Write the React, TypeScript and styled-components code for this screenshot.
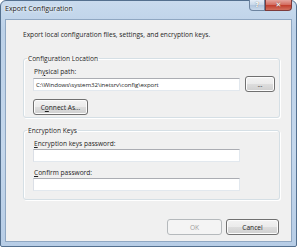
import React from 'react';
import styled, { createGlobalStyle } from 'styled-components';

const GlobalStyle = createGlobalStyle`
  html, body {
    margin: 0;
    padding: 0;
    background: #ffffff;
  }
  body {
    font-family: "Open Sans", "DejaVu Sans", sans-serif;
    font-size: 6.6px;
    color: #1e1e1e;
  }
`;

const Window = styled.div`
  width: 297px;
  height: 247px;
  box-sizing: border-box;
  border: 1px solid #54708f;
  border-radius: 6px 6px 2px 2px;
  background: linear-gradient(180deg, #c9dbee 0%, #bcd1e8 12%, #c4d7ec 60%, #b7cde6 100%);
  display: flex;
  flex-direction: column;
  padding: 0 4px 4px 4px;
`;

const TitleBar = styled.div`
  height: 18px;
  display: flex;
  align-items: flex-start;
`;

const Title = styled.div`
  padding: 3px 0 0 0;
  font-size: 7px;
  color: #1a1a1a;
  text-shadow: 0 0 4px #ffffff, 0 0 2px #ffffff;
`;

const CaptionButtons = styled.div`
  margin-left: auto;
  margin-top: -1px;
  display: flex;
`;

const CaptionButton = styled.div<{ $close?: boolean }>`
  width: ${({ $close }) => ($close ? '27px' : '16px')};
  height: 11px;
  box-sizing: border-box;
  border: 1px solid ${({ $close }) => ($close ? '#7d3b3b' : '#6d84a0')};
  border-top: none;
  border-radius: ${({ $close }) => ($close ? '0 0 4px 0' : '0 0 0 4px')};
  background: ${({ $close }) =>
    $close
      ? 'linear-gradient(180deg, #e5a59e 0%, #d46f63 45%, #c2402f 55%, #d1705e 100%)'
      : 'linear-gradient(180deg, #e6eef7 0%, #cad9ea 45%, #b3c7de 55%, #c8d8ea 100%)'};
  display: flex;
  align-items: center;
  justify-content: center;
  color: #ffffff;
  font-family: "DejaVu Sans", sans-serif;
  font-weight: bold;
  font-size: 7px;
  line-height: 1;
  text-shadow: 0 0 1px #555;
`;

const Client = styled.div`
  flex: 1;
  background: #f0f0f0;
  border: 1px solid #8fa7c2;
  padding: 9px 12px 0 17px;
  display: flex;
  flex-direction: column;
`;

const Intro = styled.div`
  margin-top: 1px;
  height: 10px;
  line-height: 10px;
`;

const Group = styled.fieldset<{ $height: number }>`
  margin: 0;
  padding: 0 0 0 9px;
  height: ${({ $height }) => $height}px;
  box-sizing: border-box;
  border: 1px solid #d5dfe5;
  box-shadow: inset 1px 1px 0 #ffffff, 1px 1px 0 #ffffff;
  border-radius: 3px;
  width: 257px;
  min-width: 0;
`;

const Legend = styled.legend`
  padding: 0 1px;
  margin-left: -6px;
  line-height: 9px;
  color: #1e1e1e;
`;

const FieldLabel = styled.div`
  margin-top: 4px;
  line-height: 9px;
  height: 9px;
  padding-left: 1px;
`;

const Row = styled.div`
  display: flex;
  align-items: center;
  margin-top: 1px;
`;

const TextBox = styled.div`
  width: 207px;
  height: 13px;
  box-sizing: border-box;
  background: #ffffff;
  border: 1px solid #e2e8ee;
  border-top-color: #abadb3;
  border-left-color: #dbdfe6;
  padding: 0 2px;
  line-height: 11px;
  font-size: 6.1px;
  letter-spacing: -0.05px;
  white-space: nowrap;
  overflow: hidden;
`;

const Button = styled.div<{ $width: number; $disabled?: boolean }>`
  width: ${({ $width }) => $width}px;
  height: 16px;
  box-sizing: border-box;
  border: 1px solid ${({ $disabled }) => ($disabled ? '#b5b9bc' : '#707070')};
  border-radius: 3px;
  background: ${({ $disabled }) =>
    $disabled
      ? '#f4f4f4'
      : 'linear-gradient(180deg, #f3f3f3 0%, #ebebeb 48%, #dddddd 52%, #cfcfcf 100%)'};
  box-shadow: inset 0 0 0 1px ${({ $disabled }) => ($disabled ? '#f4f4f4' : '#fcfcfc')};
  display: flex;
  align-items: center;
  justify-content: center;
  color: ${({ $disabled }) => ($disabled ? '#a0a0a0' : '#1e1e1e')};
`;

const BrowseButton = styled(Button)`
  margin-left: 5px;
  margin-top: -1px;
`;

const ConnectRow = styled.div`
  margin-top: 7px;
`;

const Footer = styled.div`
  margin-top: auto;
  margin-bottom: 6px;
  display: flex;
  justify-content: flex-end;
  gap: 4px;
`;

const Mnemonic = styled.span`
  text-decoration: underline;
`;

export default function App() {
  return (
    <>
      <GlobalStyle />
      <Window>
        <TitleBar>
          <Title>Export Configuration</Title>
          <CaptionButtons>
            <CaptionButton>?</CaptionButton>
            <CaptionButton $close>✕</CaptionButton>
          </CaptionButtons>
        </TitleBar>
        <Client>
          <Intro>Export local configuration files, settings, and encryption keys.</Intro>

          <Group $height={64} style={{ marginTop: 14 }}>
            <Legend>Configuration Location</Legend>
            <FieldLabel>Ph<Mnemonic>y</Mnemonic>sical path:</FieldLabel>
            <Row>
              <TextBox>C:\Windows\system32\inetsrv\config\export</TextBox>
              <BrowseButton $width={30}>...</BrowseButton>
            </Row>
            <ConnectRow>
              <Button $width={55}>C<Mnemonic>o</Mnemonic>nnect As...</Button>
            </ConnectRow>
          </Group>

          <Group $height={74} style={{ marginTop: 8 }}>
            <Legend>Encryption Keys</Legend>
            <FieldLabel><Mnemonic>E</Mnemonic>ncryption keys password:</FieldLabel>
            <Row>
              <TextBox />
            </Row>
            <FieldLabel style={{ marginTop: 6 }}><Mnemonic>C</Mnemonic>onfirm password:</FieldLabel>
            <Row>
              <TextBox />
            </Row>
          </Group>

          <Footer>
            <Button $width={55} $disabled>OK</Button>
            <Button $width={53}>Cancel</Button>
          </Footer>
        </Client>
      </Window>
    </>
  );
}
